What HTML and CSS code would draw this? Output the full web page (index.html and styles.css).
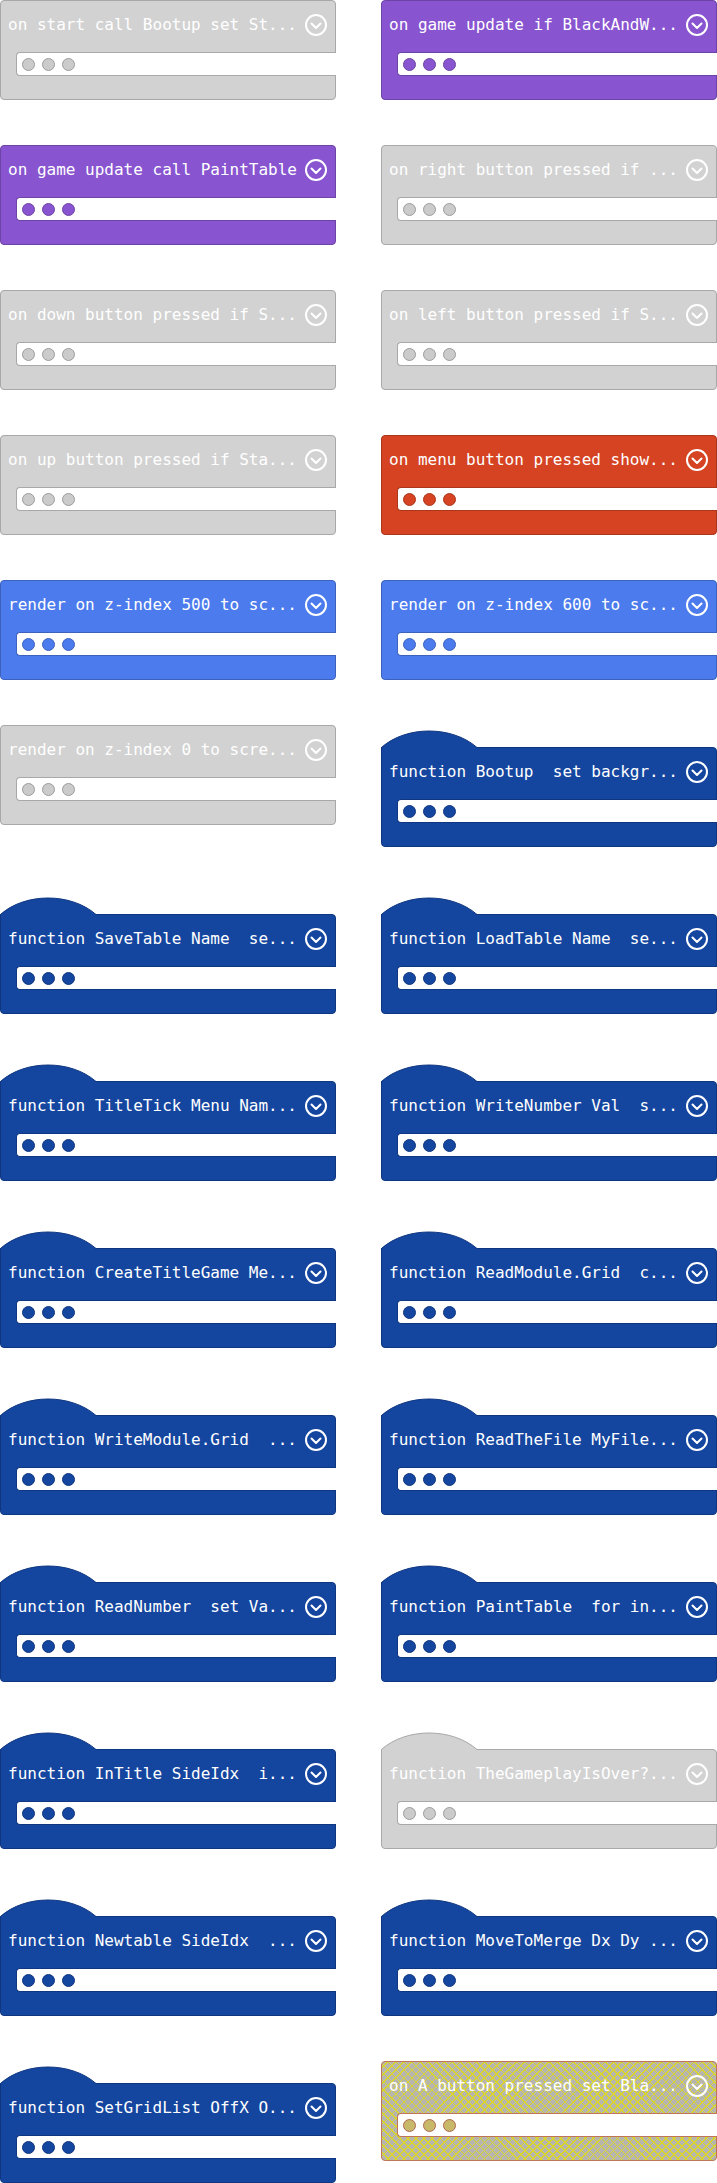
FILE: index.html
```html
<!DOCTYPE html>
<html>
<head>
<meta charset="utf-8">
<link rel="stylesheet" href="styles.css">
</head>
<body>
<div class="grid">

  <div class="cell"><div class="blk gray"><div class="head"><span class="lbl">on start call Bootup set St...</span><svg class="chev" viewBox="0 0 22 22"><circle cx="11" cy="11" r="10"/><path d="M6.5 9.5 L11 14 L15.5 9.5"/></svg></div><div class="slot"><i class="dot"></i><i class="dot"></i><i class="dot"></i></div></div></div>
  <div class="cell"><div class="blk game"><div class="head"><span class="lbl">on game update if BlackAndW...</span><svg class="chev" viewBox="0 0 22 22"><circle cx="11" cy="11" r="10"/><path d="M6.5 9.5 L11 14 L15.5 9.5"/></svg></div><div class="slot"><i class="dot"></i><i class="dot"></i><i class="dot"></i></div></div></div>

  <div class="cell"><div class="blk game"><div class="head"><span class="lbl">on game update call PaintTable</span><svg class="chev" viewBox="0 0 22 22"><circle cx="11" cy="11" r="10"/><path d="M6.5 9.5 L11 14 L15.5 9.5"/></svg></div><div class="slot"><i class="dot"></i><i class="dot"></i><i class="dot"></i></div></div></div>
  <div class="cell"><div class="blk gray"><div class="head"><span class="lbl">on right button pressed if ...</span><svg class="chev" viewBox="0 0 22 22"><circle cx="11" cy="11" r="10"/><path d="M6.5 9.5 L11 14 L15.5 9.5"/></svg></div><div class="slot"><i class="dot"></i><i class="dot"></i><i class="dot"></i></div></div></div>

  <div class="cell"><div class="blk gray"><div class="head"><span class="lbl">on down button pressed if S...</span><svg class="chev" viewBox="0 0 22 22"><circle cx="11" cy="11" r="10"/><path d="M6.5 9.5 L11 14 L15.5 9.5"/></svg></div><div class="slot"><i class="dot"></i><i class="dot"></i><i class="dot"></i></div></div></div>
  <div class="cell"><div class="blk gray"><div class="head"><span class="lbl">on left button pressed if S...</span><svg class="chev" viewBox="0 0 22 22"><circle cx="11" cy="11" r="10"/><path d="M6.5 9.5 L11 14 L15.5 9.5"/></svg></div><div class="slot"><i class="dot"></i><i class="dot"></i><i class="dot"></i></div></div></div>

  <div class="cell"><div class="blk gray"><div class="head"><span class="lbl">on up button pressed if Sta...</span><svg class="chev" viewBox="0 0 22 22"><circle cx="11" cy="11" r="10"/><path d="M6.5 9.5 L11 14 L15.5 9.5"/></svg></div><div class="slot"><i class="dot"></i><i class="dot"></i><i class="dot"></i></div></div></div>
  <div class="cell"><div class="blk ctrl"><div class="head"><span class="lbl">on menu button pressed show...</span><svg class="chev" viewBox="0 0 22 22"><circle cx="11" cy="11" r="10"/><path d="M6.5 9.5 L11 14 L15.5 9.5"/></svg></div><div class="slot"><i class="dot"></i><i class="dot"></i><i class="dot"></i></div></div></div>

  <div class="cell"><div class="blk scene"><div class="head"><span class="lbl">render on z-index 500 to sc...</span><svg class="chev" viewBox="0 0 22 22"><circle cx="11" cy="11" r="10"/><path d="M6.5 9.5 L11 14 L15.5 9.5"/></svg></div><div class="slot"><i class="dot"></i><i class="dot"></i><i class="dot"></i></div></div></div>
  <div class="cell"><div class="blk scene"><div class="head"><span class="lbl">render on z-index 600 to sc...</span><svg class="chev" viewBox="0 0 22 22"><circle cx="11" cy="11" r="10"/><path d="M6.5 9.5 L11 14 L15.5 9.5"/></svg></div><div class="slot"><i class="dot"></i><i class="dot"></i><i class="dot"></i></div></div></div>

  <div class="cell"><div class="blk gray"><div class="head"><span class="lbl">render on z-index 0 to scre...</span><svg class="chev" viewBox="0 0 22 22"><circle cx="11" cy="11" r="10"/><path d="M6.5 9.5 L11 14 L15.5 9.5"/></svg></div><div class="slot"><i class="dot"></i><i class="dot"></i><i class="dot"></i></div></div></div>
  <div class="cell func"><svg class="hat" viewBox="0 0 97 23"><path class="hf" d="M0 23 L0 22.5 C25 0.5 71 0.5 96 22.5 L97 23 Z"/><path class="hs" d="M0.5 23 L0.5 22.5 C25 0.5 71 0.5 96 22.5 L97 22.5"/></svg><div class="blk hatblk"><div class="head"><span class="lbl">function Bootup  set backgr...</span><svg class="chev" viewBox="0 0 22 22"><circle cx="11" cy="11" r="10"/><path d="M6.5 9.5 L11 14 L15.5 9.5"/></svg></div><div class="slot"><i class="dot"></i><i class="dot"></i><i class="dot"></i></div></div></div>

  <div class="cell func"><svg class="hat" viewBox="0 0 97 23"><path class="hf" d="M0 23 L0 22.5 C25 0.5 71 0.5 96 22.5 L97 23 Z"/><path class="hs" d="M0.5 23 L0.5 22.5 C25 0.5 71 0.5 96 22.5 L97 22.5"/></svg><div class="blk hatblk"><div class="head"><span class="lbl">function SaveTable Name  se...</span><svg class="chev" viewBox="0 0 22 22"><circle cx="11" cy="11" r="10"/><path d="M6.5 9.5 L11 14 L15.5 9.5"/></svg></div><div class="slot"><i class="dot"></i><i class="dot"></i><i class="dot"></i></div></div></div>
  <div class="cell func"><svg class="hat" viewBox="0 0 97 23"><path class="hf" d="M0 23 L0 22.5 C25 0.5 71 0.5 96 22.5 L97 23 Z"/><path class="hs" d="M0.5 23 L0.5 22.5 C25 0.5 71 0.5 96 22.5 L97 22.5"/></svg><div class="blk hatblk"><div class="head"><span class="lbl">function LoadTable Name  se...</span><svg class="chev" viewBox="0 0 22 22"><circle cx="11" cy="11" r="10"/><path d="M6.5 9.5 L11 14 L15.5 9.5"/></svg></div><div class="slot"><i class="dot"></i><i class="dot"></i><i class="dot"></i></div></div></div>

  <div class="cell func"><svg class="hat" viewBox="0 0 97 23"><path class="hf" d="M0 23 L0 22.5 C25 0.5 71 0.5 96 22.5 L97 23 Z"/><path class="hs" d="M0.5 23 L0.5 22.5 C25 0.5 71 0.5 96 22.5 L97 22.5"/></svg><div class="blk hatblk"><div class="head"><span class="lbl">function TitleTick Menu Nam...</span><svg class="chev" viewBox="0 0 22 22"><circle cx="11" cy="11" r="10"/><path d="M6.5 9.5 L11 14 L15.5 9.5"/></svg></div><div class="slot"><i class="dot"></i><i class="dot"></i><i class="dot"></i></div></div></div>
  <div class="cell func"><svg class="hat" viewBox="0 0 97 23"><path class="hf" d="M0 23 L0 22.5 C25 0.5 71 0.5 96 22.5 L97 23 Z"/><path class="hs" d="M0.5 23 L0.5 22.5 C25 0.5 71 0.5 96 22.5 L97 22.5"/></svg><div class="blk hatblk"><div class="head"><span class="lbl">function WriteNumber Val  s...</span><svg class="chev" viewBox="0 0 22 22"><circle cx="11" cy="11" r="10"/><path d="M6.5 9.5 L11 14 L15.5 9.5"/></svg></div><div class="slot"><i class="dot"></i><i class="dot"></i><i class="dot"></i></div></div></div>

  <div class="cell func"><svg class="hat" viewBox="0 0 97 23"><path class="hf" d="M0 23 L0 22.5 C25 0.5 71 0.5 96 22.5 L97 23 Z"/><path class="hs" d="M0.5 23 L0.5 22.5 C25 0.5 71 0.5 96 22.5 L97 22.5"/></svg><div class="blk hatblk"><div class="head"><span class="lbl">function CreateTitleGame Me...</span><svg class="chev" viewBox="0 0 22 22"><circle cx="11" cy="11" r="10"/><path d="M6.5 9.5 L11 14 L15.5 9.5"/></svg></div><div class="slot"><i class="dot"></i><i class="dot"></i><i class="dot"></i></div></div></div>
  <div class="cell func"><svg class="hat" viewBox="0 0 97 23"><path class="hf" d="M0 23 L0 22.5 C25 0.5 71 0.5 96 22.5 L97 23 Z"/><path class="hs" d="M0.5 23 L0.5 22.5 C25 0.5 71 0.5 96 22.5 L97 22.5"/></svg><div class="blk hatblk"><div class="head"><span class="lbl">function ReadModule.Grid  c...</span><svg class="chev" viewBox="0 0 22 22"><circle cx="11" cy="11" r="10"/><path d="M6.5 9.5 L11 14 L15.5 9.5"/></svg></div><div class="slot"><i class="dot"></i><i class="dot"></i><i class="dot"></i></div></div></div>

  <div class="cell func"><svg class="hat" viewBox="0 0 97 23"><path class="hf" d="M0 23 L0 22.5 C25 0.5 71 0.5 96 22.5 L97 23 Z"/><path class="hs" d="M0.5 23 L0.5 22.5 C25 0.5 71 0.5 96 22.5 L97 22.5"/></svg><div class="blk hatblk"><div class="head"><span class="lbl">function WriteModule.Grid  ...</span><svg class="chev" viewBox="0 0 22 22"><circle cx="11" cy="11" r="10"/><path d="M6.5 9.5 L11 14 L15.5 9.5"/></svg></div><div class="slot"><i class="dot"></i><i class="dot"></i><i class="dot"></i></div></div></div>
  <div class="cell func"><svg class="hat" viewBox="0 0 97 23"><path class="hf" d="M0 23 L0 22.5 C25 0.5 71 0.5 96 22.5 L97 23 Z"/><path class="hs" d="M0.5 23 L0.5 22.5 C25 0.5 71 0.5 96 22.5 L97 22.5"/></svg><div class="blk hatblk"><div class="head"><span class="lbl">function ReadTheFile MyFile...</span><svg class="chev" viewBox="0 0 22 22"><circle cx="11" cy="11" r="10"/><path d="M6.5 9.5 L11 14 L15.5 9.5"/></svg></div><div class="slot"><i class="dot"></i><i class="dot"></i><i class="dot"></i></div></div></div>

  <div class="cell func"><svg class="hat" viewBox="0 0 97 23"><path class="hf" d="M0 23 L0 22.5 C25 0.5 71 0.5 96 22.5 L97 23 Z"/><path class="hs" d="M0.5 23 L0.5 22.5 C25 0.5 71 0.5 96 22.5 L97 22.5"/></svg><div class="blk hatblk"><div class="head"><span class="lbl">function ReadNumber  set Va...</span><svg class="chev" viewBox="0 0 22 22"><circle cx="11" cy="11" r="10"/><path d="M6.5 9.5 L11 14 L15.5 9.5"/></svg></div><div class="slot"><i class="dot"></i><i class="dot"></i><i class="dot"></i></div></div></div>
  <div class="cell func"><svg class="hat" viewBox="0 0 97 23"><path class="hf" d="M0 23 L0 22.5 C25 0.5 71 0.5 96 22.5 L97 23 Z"/><path class="hs" d="M0.5 23 L0.5 22.5 C25 0.5 71 0.5 96 22.5 L97 22.5"/></svg><div class="blk hatblk"><div class="head"><span class="lbl">function PaintTable  for in...</span><svg class="chev" viewBox="0 0 22 22"><circle cx="11" cy="11" r="10"/><path d="M6.5 9.5 L11 14 L15.5 9.5"/></svg></div><div class="slot"><i class="dot"></i><i class="dot"></i><i class="dot"></i></div></div></div>

  <div class="cell func"><svg class="hat" viewBox="0 0 97 23"><path class="hf" d="M0 23 L0 22.5 C25 0.5 71 0.5 96 22.5 L97 23 Z"/><path class="hs" d="M0.5 23 L0.5 22.5 C25 0.5 71 0.5 96 22.5 L97 22.5"/></svg><div class="blk hatblk"><div class="head"><span class="lbl">function InTitle SideIdx  i...</span><svg class="chev" viewBox="0 0 22 22"><circle cx="11" cy="11" r="10"/><path d="M6.5 9.5 L11 14 L15.5 9.5"/></svg></div><div class="slot"><i class="dot"></i><i class="dot"></i><i class="dot"></i></div></div></div>
  <div class="cell func gray"><svg class="hat" viewBox="0 0 97 23"><path class="hf" d="M0 23 L0 22.5 C25 0.5 71 0.5 96 22.5 L97 23 Z"/><path class="hs" d="M0.5 23 L0.5 22.5 C25 0.5 71 0.5 96 22.5 L97 22.5"/></svg><div class="blk hatblk"><div class="head"><span class="lbl">function TheGameplayIsOver?...</span><svg class="chev" viewBox="0 0 22 22"><circle cx="11" cy="11" r="10"/><path d="M6.5 9.5 L11 14 L15.5 9.5"/></svg></div><div class="slot"><i class="dot"></i><i class="dot"></i><i class="dot"></i></div></div></div>

  <div class="cell func"><svg class="hat" viewBox="0 0 97 23"><path class="hf" d="M0 23 L0 22.5 C25 0.5 71 0.5 96 22.5 L97 23 Z"/><path class="hs" d="M0.5 23 L0.5 22.5 C25 0.5 71 0.5 96 22.5 L97 22.5"/></svg><div class="blk hatblk"><div class="head"><span class="lbl">function Newtable SideIdx  ...</span><svg class="chev" viewBox="0 0 22 22"><circle cx="11" cy="11" r="10"/><path d="M6.5 9.5 L11 14 L15.5 9.5"/></svg></div><div class="slot"><i class="dot"></i><i class="dot"></i><i class="dot"></i></div></div></div>
  <div class="cell func"><svg class="hat" viewBox="0 0 97 23"><path class="hf" d="M0 23 L0 22.5 C25 0.5 71 0.5 96 22.5 L97 23 Z"/><path class="hs" d="M0.5 23 L0.5 22.5 C25 0.5 71 0.5 96 22.5 L97 22.5"/></svg><div class="blk hatblk"><div class="head"><span class="lbl">function MoveToMerge Dx Dy ...</span><svg class="chev" viewBox="0 0 22 22"><circle cx="11" cy="11" r="10"/><path d="M6.5 9.5 L11 14 L15.5 9.5"/></svg></div><div class="slot"><i class="dot"></i><i class="dot"></i><i class="dot"></i></div></div></div>

  <div class="cell func"><svg class="hat" viewBox="0 0 97 23"><path class="hf" d="M0 23 L0 22.5 C25 0.5 71 0.5 96 22.5 L97 23 Z"/><path class="hs" d="M0.5 23 L0.5 22.5 C25 0.5 71 0.5 96 22.5 L97 22.5"/></svg><div class="blk hatblk"><div class="head"><span class="lbl">function SetGridList OffX O...</span><svg class="chev" viewBox="0 0 22 22"><circle cx="11" cy="11" r="10"/><path d="M6.5 9.5 L11 14 L15.5 9.5"/></svg></div><div class="slot"><i class="dot"></i><i class="dot"></i><i class="dot"></i></div></div></div>
  <div class="cell"><div class="blk hatch"><div class="head"><span class="lbl">on A button pressed set Bla...</span><svg class="chev" viewBox="0 0 22 22"><circle cx="11" cy="11" r="10"/><path d="M6.5 9.5 L11 14 L15.5 9.5"/></svg></div><div class="slot"><i class="dot"></i><i class="dot"></i><i class="dot"></i></div></div></div>

</div>
</body>
</html>
```

FILE: styles.css
```css
html, body {
  margin: 0;
  padding: 0;
  background: #ffffff;
}

.grid {
  display: grid;
  grid-template-columns: 336px 336px;
  column-gap: 45px;
  row-gap: 45px;
  align-items: start;
}

.cell {
  --fill: #1446a0;
  --line: #0f3680;
  --dot: #1446a0;
  --dotline: #0f3680;
  display: flex;
  flex-direction: column;
}

.blk {
  height: 100px;
  box-sizing: border-box;
  border: 1px solid var(--line);
  border-radius: 4px;
  background: var(--fill);
  display: flex;
  flex-direction: column;
}

.blk.gray, .cell.gray {
  --fill: #d2d2d2;
  --line: #a8a8a8;
  --dot: #cbcbcb;
  --dotline: #9c9c9c;
}
.blk.game {
  --fill: #8854d0;
  --line: #6d43a6;
  --dot: #8854d0;
  --dotline: #6d43a6;
}
.blk.ctrl {
  --fill: #d54322;
  --line: #aa361b;
  --dot: #d54322;
  --dotline: #aa361b;
}
.blk.scene {
  --fill: #4b7bec;
  --line: #3c62bd;
  --dot: #4b7bec;
  --dotline: #3c62bd;
}
.blk.hatch {
  --fill: #b6b6ae;
  --line: #c07458;
  --dot: #c8b86a;
  --dotline: #b06a4e;
  background:
    repeating-linear-gradient(45deg, rgba(0,0,0,0) 0 4.6px, #d9d42e 4.6px 5.7px),
    repeating-linear-gradient(-45deg, rgba(0,0,0,0) 0 4.6px, #d9d42e 4.6px 5.7px),
    #b6b6ae;
}

.hatblk {
  border-top-left-radius: 0;
}

.hat {
  display: block;
  width: 97px;
  height: 23px;
  margin-bottom: -1px;
  position: relative;
  z-index: 1;
}
.hat .hf {
  fill: var(--fill);
}
.hat .hs {
  fill: none;
  stroke: var(--line);
  stroke-width: 1;
}

.head {
  height: 47px;
  display: flex;
  align-items: center;
  justify-content: space-between;
  padding: 0 8px 0 7px;
}

.lbl {
  font-family: "DejaVu Sans Mono", "Liberation Mono", monospace;
  font-size: 16px;
  color: #ffffff;
  white-space: pre;
  line-height: 20px;
}

.chev {
  width: 22px;
  height: 22px;
  flex: none;
}
.chev circle, .chev path {
  fill: none;
  stroke: #ffffff;
  stroke-width: 2;
  stroke-linecap: round;
  stroke-linejoin: round;
}

.slot {
  margin-top: 4px;
  margin-left: 15px;
  margin-right: -1px;
  height: 24px;
  box-sizing: border-box;
  background: #ffffff;
  border: 1px solid var(--line);
  border-right: none;
  border-radius: 4px 0 0 4px;
  display: flex;
  align-items: center;
  gap: 7px;
  padding-left: 5px;
}

.dot {
  width: 13px;
  height: 13px;
  box-sizing: border-box;
  border-radius: 50%;
  background: var(--dot);
  border: 1px solid var(--dotline);
}
```
